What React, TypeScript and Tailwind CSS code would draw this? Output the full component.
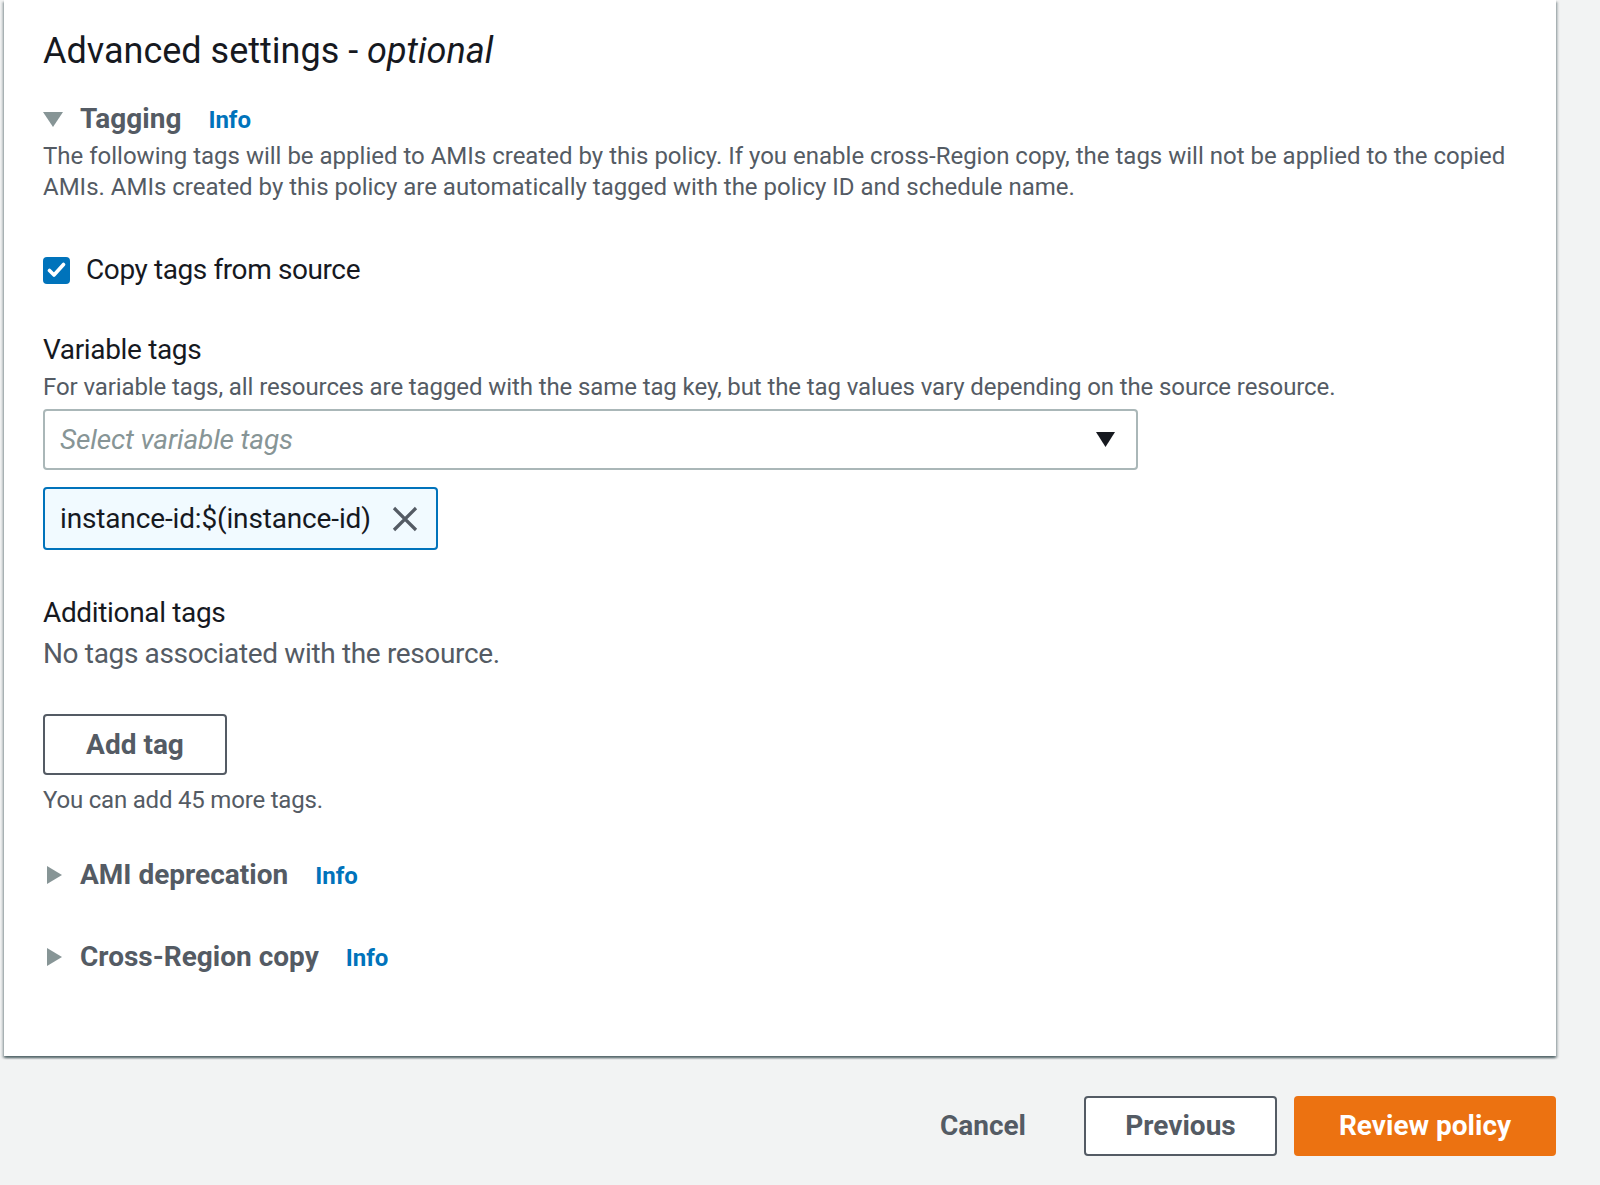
import React from 'react';

// Advanced settings step of the lifecycle policy wizard

function Caret({ open }: { open?: boolean }) {
    if (open) {
        return (
            <svg width="20" height="15" viewBox="0 0 20 15">
                <path d="M0 0h20L10 15z" fill="#879596" />
            </svg>
        );
    }
    return (
        <svg width="15" height="18" viewBox="0 0 15 18" className="ml-[4px]">
            <path d="M0 0L15 9L0 18z" fill="#879596" />
        </svg>
    );
}

function SectionHeader({ title, open }: { title: string; open?: boolean }) {
    return (
        <div className="flex items-center h-[32px]">
            <span className="w-[37px] flex items-center">
                <Caret open={open} />
            </span>
            <div className="flex items-baseline">
                <span className="text-[28px] leading-[32px] font-bold text-[#545b64]">{title}</span>
                <a className="ml-[27px] text-[24px] leading-[32px] font-bold text-[#0073bb] cursor-pointer">Info</a>
            </div>
        </div>
    );
}

export default function App() {
    return (
        <div className="w-full h-[1185px] bg-[#f2f3f3] overflow-hidden font-['Roboto','Liberation_Sans',sans-serif]">
            <div className="ml-[4px] w-[1552px] h-[1056px] bg-white pl-[39px] pt-[29px] shadow-[0_2px_2px_0_rgba(0,28,36,0.45),2px_2px_2px_0_rgba(0,28,36,0.2),-2px_2px_2px_0_rgba(0,28,36,0.2)]">
                <h2 className="text-[36px] leading-[44px] text-[#16191f]">
                    Advanced settings - <i>optional</i>
                </h2>

                <div className="mt-[30px]">
                    <SectionHeader title="Tagging" open />
                </div>
                <p className="mt-[6px] text-[24px] leading-[31px] text-[#545b64] w-[1480px]">
                    The following tags will be applied to AMIs created by this policy. If you enable cross-Region copy, the tags will not be applied to the copied AMIs. AMIs created by this policy are automatically tagged with the policy ID and schedule name.
                </p>

                <label className="mt-[53px] flex items-center h-[28px] gap-[16px]">
                    <span className="w-[27px] h-[27px] rounded-[4px] bg-[#0073bb] flex items-center justify-center">
                        <svg width="19" height="16" viewBox="0 0 19 16">
                            <path d="M2.5 8.5L7 13L16.5 2.5" fill="none" stroke="white" strokeWidth="3.6" strokeLinecap="round" strokeLinejoin="round" />
                        </svg>
                    </span>
                    <span className="text-[28px] leading-[34px] tracking-[-0.4px] text-[#16191f]">Copy tags from source</span>
                </label>

                <div className="mt-[49px] text-[28px] leading-[34px] tracking-[-0.35px] text-[#16191f]">Variable tags</div>
                <p className="mt-[5px] text-[24px] leading-[30px] tracking-[-0.1px] text-[#545b64]">
                    For variable tags, all resources are tagged with the same tag key, but the tag values vary depending on the source resource.
                </p>

                <div className="mt-[7px] w-[1095px] h-[61px] border-2 border-[#aab7b8] rounded-[4px] flex items-center justify-between pl-[15px] pr-[21px]">
                    <span className="text-[28px] italic tracking-[-0.15px] text-[#879596]">Select variable tags</span>
                    <svg width="19" height="15" viewBox="0 0 19 15">
                        <path d="M0 0h19L9.5 15z" fill="#16191f" />
                    </svg>
                </div>

                <div className="mt-[17px] inline-flex items-center h-[63px] border-2 border-[#0073bb] bg-[#f1faff] rounded-[4px] pl-[15px] pr-[18px] gap-[21px]">
                    <span className="text-[28px] tracking-[-0.15px] text-[#16191f]">instance-id:$(instance-id)</span>
                    <svg width="26" height="26" viewBox="0 0 26 26">
                        <path d="M2 2L24 24M24 2L2 24" stroke="#545b64" strokeWidth="3.2" />
                    </svg>
                </div>

                <div className="mt-[46px] text-[28px] leading-[34px] tracking-[-0.35px] text-[#16191f]">Additional tags</div>
                <p className="mt-[7px] text-[28px] leading-[34px] tracking-[-0.35px] text-[#545b64]">No tags associated with the resource.</p>

                <button className="mt-[43px] block w-[184px] h-[61px] border-2 border-[#545b64] rounded-[4px] bg-white text-[28px] font-bold text-[#545b64]">
                    Add tag
                </button>
                <p className="mt-[10px] text-[24px] leading-[30px] tracking-[-0.2px] text-[#545b64]">You can add 45 more tags.</p>

                <div className="mt-[44px]">
                    <SectionHeader title="AMI deprecation" />
                </div>
                <div className="mt-[50px]">
                    <SectionHeader title="Cross-Region copy" />
                </div>
            </div>

            <div className="ml-[4px] w-[1552px] pt-[40px] flex justify-end items-center">
                <button className="h-[60px] px-[18px] text-[28px] font-bold text-[#545b64]">Cancel</button>
                <button className="ml-[40px] w-[193px] h-[60px] border-2 border-[#545b64] rounded-[4px] bg-white text-[28px] font-bold text-[#545b64]">
                    Previous
                </button>
                <button className="ml-[17px] w-[262px] h-[60px] rounded-[4px] bg-[#ec7211] text-[28px] font-bold text-white">
                    Review policy
                </button>
            </div>
        </div>
    );
}
